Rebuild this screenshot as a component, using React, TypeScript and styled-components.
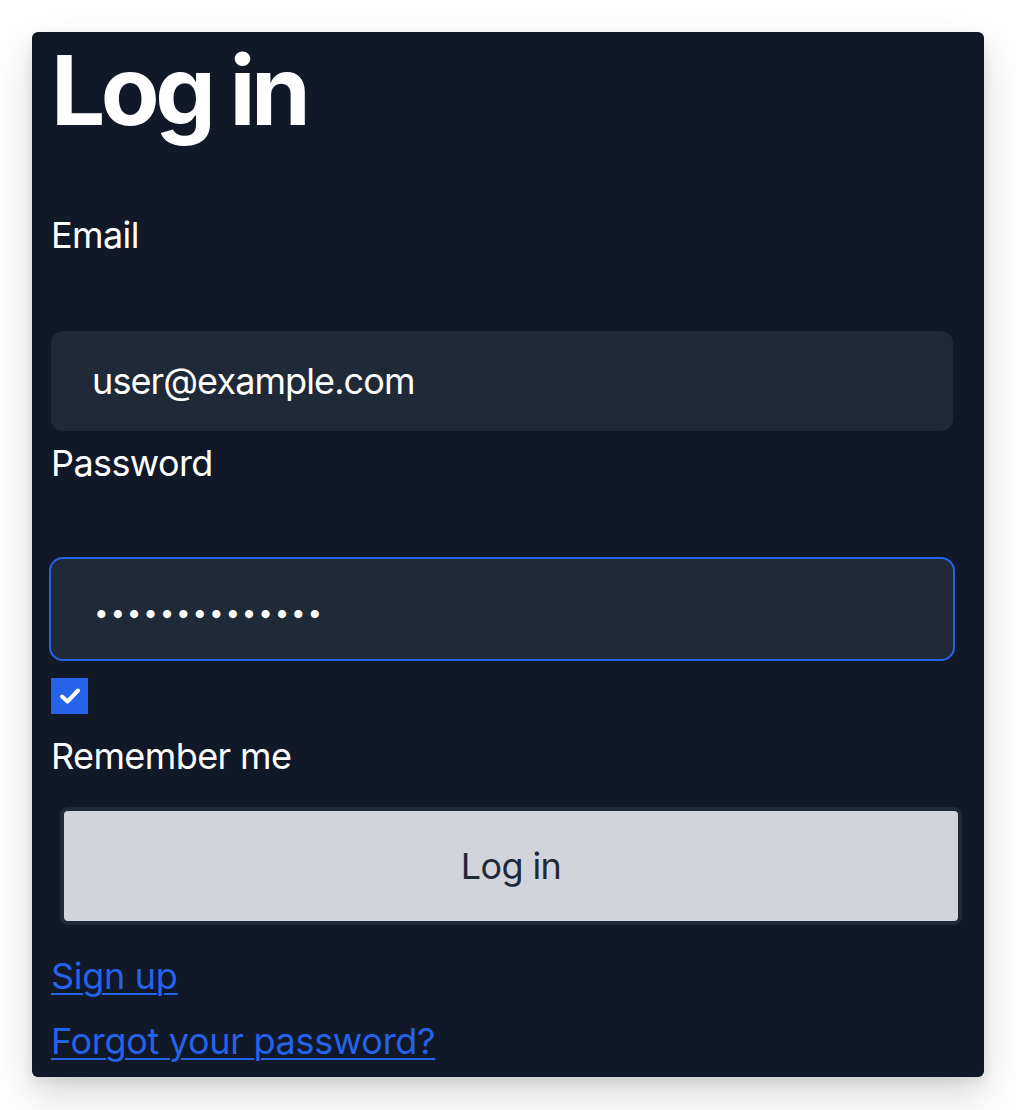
import React from "react";
import styled, { createGlobalStyle } from "styled-components";

const Global = createGlobalStyle`
  html, body {
    margin: 0;
    padding: 0;
    background: #ffffff;
  }
  body {
    font-family: Inter, "Noto Sans", "Liberation Sans", sans-serif;
    -webkit-font-smoothing: antialiased;
  }
`;

const Page = styled.div`
  padding: 32px;
  box-sizing: border-box;
  min-height: 1110px;
`;

const Card = styled.form`
  width: 952px;
  box-sizing: border-box;
  background: #111827;
  border-radius: 6px;
  padding: 10px 31px 8px 19px;
  box-shadow: 0 18px 40px rgba(0, 0, 0, 0.16), 0 4px 12px rgba(0, 0, 0, 0.08);
  display: flex;
  flex-direction: column;
  align-items: flex-start;
  letter-spacing: -0.6px;
`;

const Title = styled.h1`
  margin: 0 0 69px;
  font-size: 96px;
  line-height: 96px;
  font-weight: 700;
  color: #ffffff;
  letter-spacing: -4.5px;
`;

const Label = styled.label<{ $mt?: number }>`
  display: block;
  margin: ${(p) => p.$mt ?? 0}px 0 0;
  font-size: 36px;
  line-height: 56px;
  color: #ffffff;
  font-weight: 400;
`;

const Field = styled.input<{ $focused?: boolean; $mt?: number }>`
  display: block;
  width: 902px;
  height: 100px;
  box-sizing: border-box;
  margin-top: ${(p) => p.$mt ?? 0}px;
  padding: ${(p) => (p.$focused ? "6px 0 0 43px" : "0 0 0 41px")};
  border: none;
  border-radius: 12px;
  background: #1f2937;
  color: #ffffff;
  font-family: Inter, "Noto Sans", "Liberation Sans", sans-serif;
  font-size: ${(p) => (p.$focused ? "26px" : "36px")};
  letter-spacing: ${(p) => (p.$focused ? "1.8px" : "-0.9px")};
  outline: ${(p) => (p.$focused ? "2px solid #2563eb" : "none")};
  outline-offset: 0;
`;

const CheckBox = styled.span`
  display: flex;
  align-items: center;
  justify-content: center;
  width: 37px;
  height: 36px;
  margin-top: 19px;
  background: #2563eb;
`;

const SubmitButton = styled.button`
  display: flex;
  align-items: center;
  justify-content: center;
  width: 902px;
  height: 118px;
  box-sizing: border-box;
  margin: 23px 0 0 9px;
  border: 4px solid #1f2937;
  border-radius: 8px;
  background: #d1d5db;
  color: #1f2937;
  font-family: Inter, "Noto Sans", "Liberation Sans", sans-serif;
  font-size: 36px;
  font-weight: 400;
  letter-spacing: -0.6px;
  cursor: pointer;
`;

const Link = styled.a<{ $mt: number }>`
  display: block;
  margin-top: ${(p) => p.$mt}px;
  font-size: 36px;
  line-height: 56px;
  color: #2563eb;
  letter-spacing: -0.3px;
  text-decoration: underline;
  text-decoration-thickness: 2px;
  text-underline-offset: 4px;
`;

export default function App() {
  return (
    <Page>
      <Global />
      <Card onSubmit={(e) => e.preventDefault()}>
        <Title>Log in</Title>
        <Label htmlFor="email">Email</Label>
        <Field id="email" type="email" readOnly value="user@example.com" $mt={68} />
        <Label htmlFor="password" $mt={4}>
          Password
        </Label>
        <Field
          id="password"
          type="password"
          readOnly
          value="supersecret123"
          $focused
          $mt={68}
        />
        <CheckBox role="checkbox" aria-checked="true">
          <svg width="22" height="18" viewBox="0 0 22 18" fill="none">
            <polyline
              points="3,9.5 8.5,14.5 19,3.5"
              stroke="#ffffff"
              strokeWidth="4"
              strokeLinecap="round"
              strokeLinejoin="round"
            />
          </svg>
        </CheckBox>
        <Label $mt={14}>Remember me</Label>
        <SubmitButton type="submit">Log in</SubmitButton>
        <Link href="#" $mt={23}>
          Sign up
        </Link>
        <Link href="#" $mt={9}>
          Forgot your password?
        </Link>
      </Card>
    </Page>
  );
}
